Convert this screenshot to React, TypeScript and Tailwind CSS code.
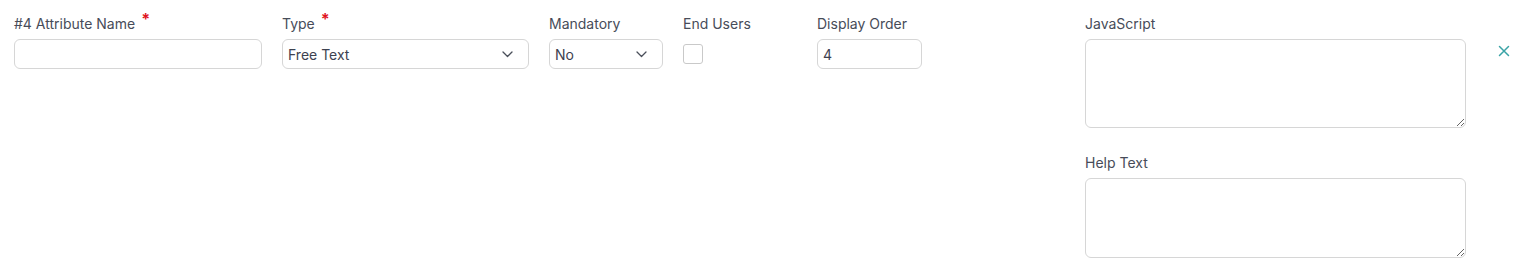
import React, { useState } from 'react';

const fieldBox =
  'h-[30px] w-full rounded-[6px] border border-[#d6d6d6] bg-white text-[14px] text-[#3d4250] outline-none';

const Label = ({ text, required }: { text: string; required?: boolean }) => (
  <div className="mb-[5px] flex h-[20px] items-center text-[14px] leading-[20px] text-[#474c59]">
    <span>{text}</span>
    {required && <span className="ml-[6px] -mt-[10px] text-[16px] font-bold leading-none text-[#e0141e]">*</span>}
  </div>
);

const Chevron = () => (
  <svg width="11" height="7" viewBox="0 0 11 7" fill="none" className="shrink-0">
    <path d="M1 1l4.5 4.5L10 1" stroke="#4a4f5a" strokeWidth="1.3" strokeLinecap="round" strokeLinejoin="round" />
  </svg>
);

const SelectBox = ({ value }: { value: string }) => (
  <div className={`${fieldBox} flex items-center justify-between pl-[5px] pr-[15px]`}>
    <span>{value}</span>
    <Chevron />
  </div>
);

const App = () => {
  const [endUsers, setEndUsers] = useState(false);
  const [order, setOrder] = useState('4');

  return (
    <div className="h-[272px] w-[1520px] bg-white font-['Inter',sans-serif]">
      <div className="flex items-start px-[14px] pt-[14px]">
        {/* left fields */}
        <div className="flex shrink-0 gap-5">
          <div className="w-[248px]">
            <Label text="#4 Attribute Name" required />
            <input type="text" className={`${fieldBox} px-[5px]`} />
          </div>
          <div className="w-[247px]">
            <Label text="Type" required />
            <SelectBox value="Free Text" />
          </div>
          <div className="w-[114px]">
            <Label text="Mandatory" />
            <SelectBox value="No" />
          </div>
          <div className="w-[114px]">
            <Label text="End Users" />
            <div className="pt-[5px]">
              <button
                type="button"
                onClick={() => setEndUsers(!endUsers)}
                className="block h-[20px] w-[20px] rounded-[3px] border border-[#c9c9c9] bg-white"
              />
            </div>
          </div>
          <div className="w-[105px]">
            <Label text="Display Order" />
            <input
              type="text"
              value={order}
              onChange={(e) => setOrder(e.target.value)}
              className={`${fieldBox} px-[5px]`}
            />
          </div>
        </div>

        {/* right column */}
        <div className="ml-[163px] w-[381px] shrink-0">
          <Label text="JavaScript" />
          <textarea className="block h-[89px] w-full rounded-[6px] border border-[#d6d6d6] bg-white text-[14px] outline-none" />
          <div className="mt-[25px]">
            <Label text="Help Text" />
            <textarea className="block h-[80px] w-full rounded-[6px] border border-[#d6d6d6] bg-white text-[14px] outline-none" />
          </div>
        </div>

        <button type="button" className="ml-[32px] mt-[31px] shrink-0 text-[#3aa3a6]">
          <svg width="12" height="12" viewBox="0 0 12 12" fill="none">
            <path d="M1.5 1.5l9 9M10.5 1.5l-9 9" stroke="currentColor" strokeWidth="1.5" strokeLinecap="round" />
          </svg>
        </button>
      </div>
    </div>
  );
};

export default App;
